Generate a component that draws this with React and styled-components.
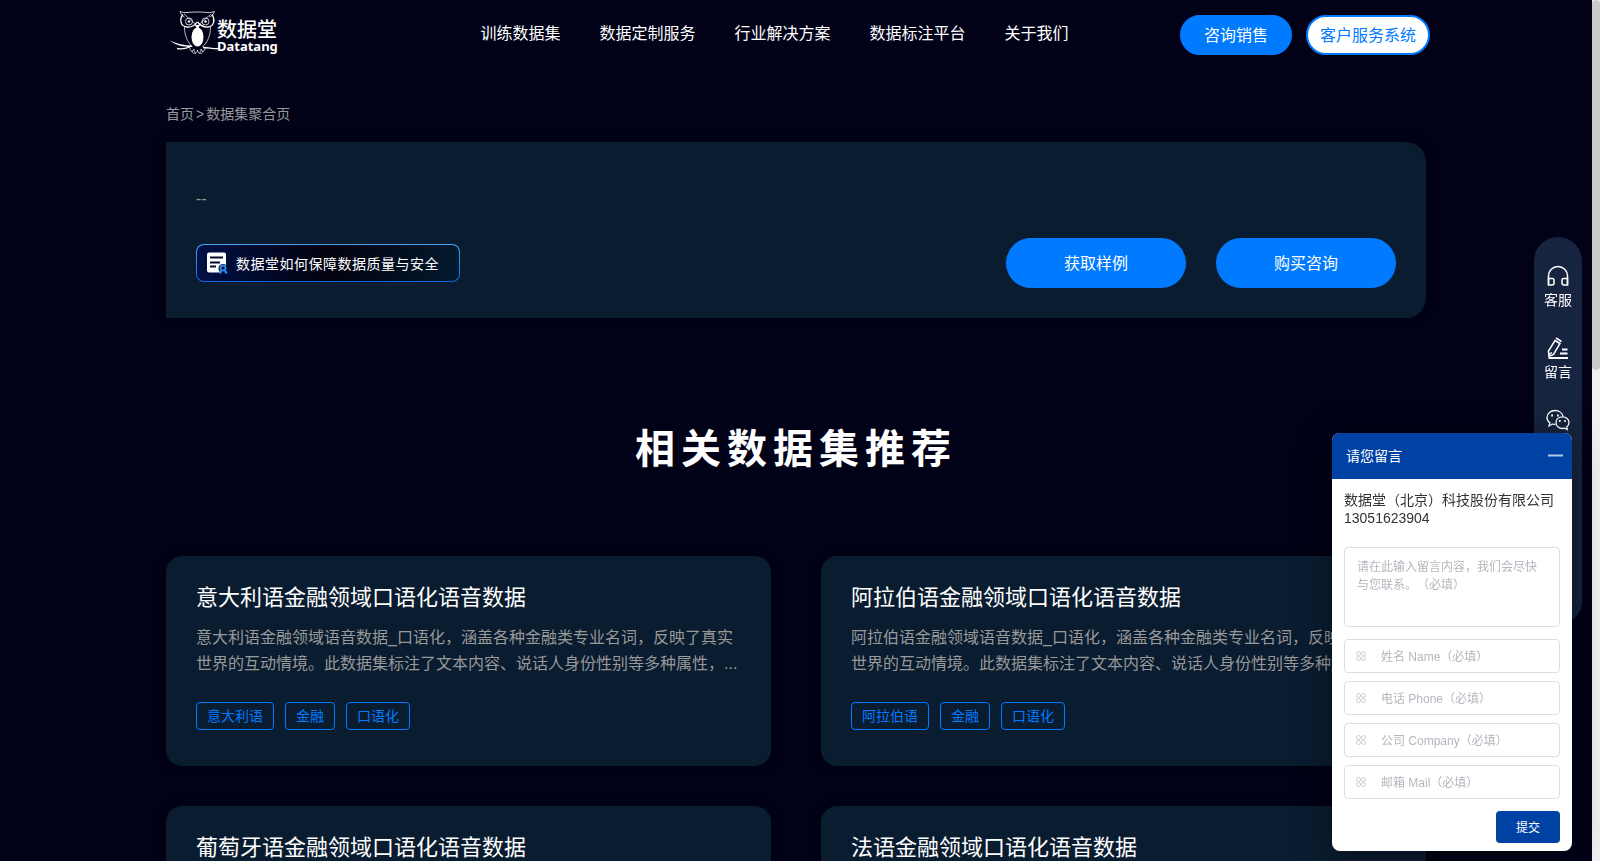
import React from "react";
import styled, { createGlobalStyle, css } from "styled-components";

const GlobalStyle = createGlobalStyle`
  * {
    box-sizing: border-box;
  }
  body {
    margin: 0;
    background: #010217;
    color: #fff;
    font-family: "Liberation Sans", "Noto Sans CJK SC", sans-serif;
    font-size: 14px;
    text-spacing-trim: space-all;
  }
  button,
  input,
  textarea {
    font-family: inherit;
    text-spacing-trim: inherit;
  }
  h1, h2, p, ul {
    margin: 0;
    padding: 0;
  }
  a {
    color: inherit;
    text-decoration: none;
  }
`;

const Shell = styled.div`
  display: flex;
  height: 100vh;
`;

const Page = styled.div`
  flex: 1;
  overflow: hidden;
`;

const ScrollTrack = styled.div`
  width: 8px;
  background: #f1f1f1;
`;

const ScrollThumb = styled.div`
  height: 43%;
  border-radius: 4px;
  background: #cbcbcb;
`;

const Header = styled.header`
  display: flex;
  align-items: center;
  justify-content: space-between;
  max-width: 1268px;
  height: 70px;
  margin: 0 auto;
  padding-left: 8px;
`;

const Logo = styled.a`
  display: flex;
  align-items: center;
  width: 108px;
  height: 50px;
  padding-bottom: 4px;
`;

const LogoText = styled.span`
  display: flex;
  flex-direction: column;
  margin-left: -3px;
  padding-top: 6px;
`;

const LogoName = styled.span`
  font-size: 20px;
  font-weight: 500;
  line-height: 20px;
`;

const LogoLatin = styled.span`
  font-family: "Noto Sans", sans-serif;
  font-size: 13px;
  font-weight: 700;
  line-height: 12px;
`;

const Nav = styled.nav`
  display: flex;
  gap: 39px;
  margin-left: 91px;
  padding-bottom: 2px;
  font-size: 16px;
  line-height: 24px;
`;

const HeaderActions = styled.div`
  display: flex;
  gap: 14px;
`;

const PillButton = styled.button`
  height: 40px;
  padding: 0 22px 2px;
  border: 2px solid #007aff;
  border-radius: 20px;
  background: #007aff;
  color: #fff;
  font-size: 16px;
  ${(props) =>
    props.$outlined &&
    css`
      padding: 0 12px 2px;
      background: #fff;
      color: #007aff;
    `}
  ${(props) =>
    props.$large &&
    css`
      width: 180px;
      height: 50px;
      border-radius: 25px;
    `}
`;

const Container = styled.main`
  max-width: 1260px;
  margin: 0 auto;
`;

const Breadcrumb = styled.nav`
  display: flex;
  gap: 2px;
  padding: 34px 0 18px;
  color: #999;
  font-size: 14px;
  line-height: 20px;
`;

const Hero = styled.section`
  padding: 47px 30px 30px;
  border-radius: 0 20px 20px 0;
  background: #0a1c30;
  box-shadow: 0 0 12px rgba(0, 0, 0, 0.3);
`;

const HeroText = styled.p`
  color: #999;
  font-size: 16px;
  line-height: 20px;
`;

const HeroRow = styled.div`
  display: flex;
  align-items: center;
  justify-content: space-between;
  margin-top: 29px;
`;

const HeroActions = styled.div`
  display: flex;
  gap: 30px;
`;

const QualityLink = styled.a`
  display: flex;
  align-items: center;
  gap: 8px;
  height: 38px;
  padding: 0 20px 0 10px;
  border: 1px solid transparent;
  border-radius: 8px;
  background:
    linear-gradient(90deg, #001046, #03020f 50%, #021a2e) padding-box,
    linear-gradient(180deg, #4ba5f5, #1064e0) border-box;
  font-size: 14px;
  letter-spacing: 0.5px;
`;

const SectionTitle = styled.h2`
  padding: 101px 0 77px;
  font-size: 40px;
  font-weight: 700;
  line-height: 60px;
  letter-spacing: 6px;
  text-align: center;
`;

const CardGrid = styled.div`
  display: grid;
  grid-template-columns: 1fr 1fr;
  gap: 40px 50px;
`;

const Card = styled.article`
  padding: 27px 30px 36px;
  border-radius: 16px;
  background: #0a1c30;
  box-shadow: 0 0 12px rgba(0, 0, 0, 0.3);
`;

const CardTitle = styled.h2`
  font-size: 22px;
  font-weight: 400;
  line-height: 30px;
`;

const CardText = styled.p`
  margin-top: 12px;
  color: #999;
  font-size: 16px;
  line-height: 26px;
`;

const Tags = styled.ul`
  display: flex;
  gap: 11px;
  margin-top: 25px;
  list-style: none;
`;

const Tag = styled.li`
  padding: 0 10px;
  border: 1px solid #007aff;
  border-radius: 4px;
  color: #007aff;
  font-size: 14px;
  line-height: 26px;
`;

const SideBar = styled.aside`
  position: fixed;
  top: 50%;
  right: 18px;
  display: flex;
  flex-direction: column;
  gap: 22px;
  width: 48px;
  height: 388px;
  padding-top: 28px;
  border-radius: 24px;
  background: #16243f;
  transform: translateY(-50%);
`;

const SideItem = styled.a`
  display: flex;
  flex-direction: column;
  align-items: center;
  gap: 3px;
  height: 50px;
  font-size: 14px;
  line-height: 20px;
`;

const Chat = styled.form`
  position: fixed;
  right: 28px;
  bottom: 10px;
  width: 240px;
  overflow: hidden;
  border-radius: 8px;
  background: #fff;
  box-shadow: 0 6px 36px rgba(0, 0, 0, 0.4);
`;

const ChatHeader = styled.div`
  display: flex;
  align-items: center;
  justify-content: space-between;
  height: 46px;
  padding: 0 8px 2px 14px;
  background: #0042a3;
  font-size: 14px;
`;

const MinimizeButton = styled.button`
  display: flex;
  padding: 0;
  border: 0;
  background: none;
`;

const ChatBody = styled.div`
  display: flex;
  flex-direction: column;
  gap: 8px;
  padding: 12px 12px 8px;
`;

const Company = styled.p`
  margin-bottom: 12px;
  color: #333;
  font-size: 14px;
  line-height: 18px;
`;

const Message = styled.textarea`
  display: block;
  height: 80px;
  margin-bottom: 4px;
  padding: 10px 12px;
  border: 1px solid #dcdee6;
  border-radius: 4px;
  font-size: 12px;
  line-height: 18px;
  resize: none;
  &::placeholder {
    color: #b4b7be;
  }
`;

const Field = styled.label`
  display: flex;
  align-items: center;
  gap: 15px;
  height: 34px;
  padding: 0 11px;
  border: 1px solid #dcdee6;
  border-radius: 4px;
`;

const FieldInput = styled.input`
  flex: 1;
  min-width: 0;
  padding: 2px 0 0;
  border: 0;
  outline: 0;
  font-size: 12px;
  &::placeholder {
    color: #b4b7be;
  }
`;

const Submit = styled.button`
  align-self: flex-end;
  width: 64px;
  height: 32px;
  margin-top: 4px;
  padding: 0 0 2px;
  border: 0;
  border-radius: 4px;
  background: #0042a3;
  color: #fff;
  font-size: 12px;
`;

const OwlIcon = () => (
  <svg width="50" height="46" viewBox="0 0 50 46" fill="none" stroke="#fff">
    <path d="M10 1.500c5 2 8 .5 17.500 .5s12 1.500 17-.5c-1 3-3 4.500-5 5.500M10 1.500c1 3 2.500 4.500 4.500 5.500" strokeWidth="0.800" />
    <path d="M13 4.500c-4 5-2.500 12 4 12.500 5 .5 8-2 10-5M42 4.500c3.500 5 2 12-4 12.500-5 .5-8-2-10.500-5" strokeWidth="1.300" />
    <path d="M14 4l13.500 12L41 4" strokeWidth="0.700" />
    <circle cx="19" cy="11.500" r="3.500" strokeWidth="0.800" />
    <circle cx="19" cy="11.500" r="1.200" fill="#fff" stroke="none" />
    <circle cx="35.500" cy="11.500" r="3.500" strokeWidth="0.800" />
    <circle cx="35.500" cy="11.500" r="1.200" fill="#fff" stroke="none" />
    <path d="M25 15l2.500 5 2.500-5z" fill="#fff" stroke="none" />
    <path d="M14.500 17c0 9 3 15 8 20M40.500 17c0 9-3 15-8 20" strokeWidth="0.700" />
    <ellipse cx="27.500" cy="27" rx="6" ry="9.500" fill="#fff" stroke="none" />
    <path d="M0 30.500c7 3.500 14 5 22 5v1.500c-9 0-17-2-22-6.500z" fill="#fff" stroke="none" />
    <path d="M7 38.500c5 1 9 0 13-1.500M33 37.500c6 0 10 1.500 16 1" strokeWidth="1.300" />
    <path d="M20 38c0 4 3 4 4 1 0 5 3 5 3.500 1 .5 4 3.500 4 3.500-1 1 3 4 3 4-1M22 41c1 3 3 3 4 2M33 41c-1 3-3 3-4 2" strokeWidth="0.700" />
  </svg>
);

const CertificateIcon = () => (
  <svg width="21" height="22" viewBox="0 0 21 22" fill="none">
    <rect x="0" y="0.500" width="19" height="20" rx="2" fill="#fff" />
    <path d="M3 5.500h13M3 10.500h10M3 14.500h6" stroke="#06082a" strokeWidth="2" />
    <circle cx="16" cy="16.500" r="4.500" fill="#06082a" />
    <circle cx="16" cy="16" r="2.500" stroke="#2b8df0" strokeWidth="1.800" />
    <path d="M14 18.500l-1.200 3M18 18.500l1.500 3" stroke="#2b8df0" strokeWidth="2.200" />
  </svg>
);

const HeadsetIcon = () => (
  <svg width="22" height="22" viewBox="0 0 22 22" fill="none" stroke="#fff" strokeWidth="1.500">
    <path d="M1.500 20V11a9.500 9.500 0 0 1 19 0v9" />
    <path d="M1.500 13.500h4a1.500 1.500 0 0 1 1.500 1.500v3a2 2 0 0 1-2 2H1.500zM20.500 13.500h-4A1.500 1.500 0 0 0 15 15v3a2 2 0 0 0 2 2h3.500z" />
  </svg>
);

const PencilIcon = () => (
  <svg width="22" height="22" viewBox="0 0 22 22" fill="none" stroke="#fff" strokeWidth="1.500">
    <path d="M8 3.500l5 3-6.500 11L2 19.500 1.500 14zM9 1l5.500 3.500M5 15.500l-3 2" />
    <path d="M15 12.500h5.500M13 16.500h7.500M1.500 21h19.500" strokeWidth="1.800" />
  </svg>
);

const WechatIcon = () => (
  <svg width="24" height="22" viewBox="0 0 24 22" fill="none" stroke="#fff" strokeWidth="1.300">
    <path d="M9.500 15.500c-1 0-2-.2-3-.5l-3.500 2 .8-3.200C2 12.500 1 10.600 1 8.500 1 4.500 4.600 1.500 9 1.500c4 0 7.400 2.400 8 6" />
    <path d="M16.500 7.800c3.700 0 6.500 2.500 6.500 5.700 0 1.800-.9 3.400-2.300 4.500l.6 2.500-2.700-1.300c-.7.2-1.400.3-2.100.3-3.700 0-6.500-2.600-6.500-6s2.800-5.700 6.500-5.700z" />
    <path d="M5.200 6.500h1.800M11 6.500h1.800M13 12h1.600M18.200 12h1.600" strokeWidth="1.800" />
  </svg>
);

const CloverIcon = () => (
  <svg width="10" height="10" viewBox="0 0 10 10" fill="none" stroke="#c4c7ce" strokeWidth="0.900">
    <circle cx="2.500" cy="2.500" r="2" />
    <circle cx="7.500" cy="2.500" r="2" />
    <circle cx="2.500" cy="7.500" r="2" />
    <circle cx="7.500" cy="7.500" r="2" />
  </svg>
);

const navItems = ["训练数据集", "数据定制服务", "行业解决方案", "数据标注平台", "关于我们"];

const languages = ["意大利语", "阿拉伯语", "葡萄牙语", "法语"];

const fields = [
  { name: "name", placeholder: "姓名 Name（必填）" },
  { name: "phone", placeholder: "电话 Phone（必填）" },
  { name: "company", placeholder: "公司 Company（必填）" },
  { name: "mail", placeholder: "邮箱 Mail（必填）" },
];

const DatasetCard = ({ language }) => (
  <Card>
    <CardTitle>{`${language}金融领域口语化语音数据`}</CardTitle>
    <CardText>
      {`${language}金融领域语音数据_口语化，涵盖各种金融类专业名词，反映了真实世界的互动情境。此数据集标注了文本内容、说话人身份性别等多种属性，...`}
    </CardText>
    <Tags>
      {[language, "金融", "口语化"].map((tag) => (
        <Tag key={tag}>{tag}</Tag>
      ))}
    </Tags>
  </Card>
);

const ChatPanel = () => (
  <Chat onSubmit={(e) => e.preventDefault()}>
    <ChatHeader>
      <span>请您留言</span>
      <MinimizeButton type="button" aria-label="最小化">
        <svg width="17" height="10" viewBox="0 0 17 10">
          <path d="M1 5.500h15" stroke="#b3c7e3" strokeWidth="2" />
        </svg>
      </MinimizeButton>
    </ChatHeader>
    <ChatBody>
      <Company>
        数据堂（北京）科技股份有限公司
        <br />
        13051623904
      </Company>
      <Message
        aria-label="留言内容"
        placeholder="请在此输入留言内容，我们会尽快与您联系。（必填）"
      />
      {fields.map((field) => (
        <Field key={field.name}>
          <CloverIcon />
          <FieldInput
            name={field.name}
            aria-label={field.placeholder}
            placeholder={field.placeholder}
          />
        </Field>
      ))}
      <Submit type="submit">提交</Submit>
    </ChatBody>
  </Chat>
);

const App = () => {
  return (
    <Shell>
      <GlobalStyle />
      <Page>
        <Header>
          <Logo href="#">
            <OwlIcon />
            <LogoText>
              <LogoName>数据堂</LogoName>
              <LogoLatin>Datatang</LogoLatin>
            </LogoText>
          </Logo>
          <Nav>
            {navItems.map((item) => (
              <a href="#" key={item}>
                {item}
              </a>
            ))}
          </Nav>
          <HeaderActions>
            <PillButton>咨询销售</PillButton>
            <PillButton $outlined>客户服务系统</PillButton>
          </HeaderActions>
        </Header>
        <Container>
          <Breadcrumb>
            <a href="#">首页</a>
            <span>&gt;</span>
            <a href="#">数据集聚合页</a>
          </Breadcrumb>
          <Hero>
            <HeroText>--</HeroText>
            <HeroRow>
              <QualityLink href="#">
                <CertificateIcon />
                数据堂如何保障数据质量与安全
              </QualityLink>
              <HeroActions>
                <PillButton $large>获取样例</PillButton>
                <PillButton $large>购买咨询</PillButton>
              </HeroActions>
            </HeroRow>
          </Hero>
          <SectionTitle>相关数据集推荐</SectionTitle>
          <CardGrid>
            {languages.map((language) => (
              <DatasetCard key={language} language={language} />
            ))}
          </CardGrid>
        </Container>
      </Page>
      <ScrollTrack>
        <ScrollThumb />
      </ScrollTrack>
      <SideBar>
        <SideItem href="#">
          <HeadsetIcon />
          客服
        </SideItem>
        <SideItem href="#">
          <PencilIcon />
          留言
        </SideItem>
        <SideItem href="#" aria-label="微信">
          <WechatIcon />
        </SideItem>
      </SideBar>
      <ChatPanel />
    </Shell>
  );
};

export default App;
